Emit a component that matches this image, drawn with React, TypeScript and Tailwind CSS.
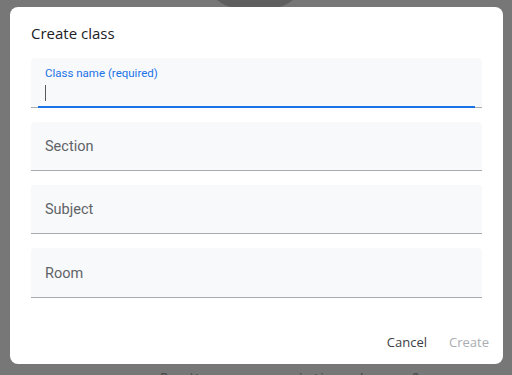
import React from "react";

function Field({ label, h }: { label: string; h: string }) {
  return (
    <div className={`${h} rounded-t-[4px] bg-[#f8f9fa] border-b border-[#a8abaf] flex items-center pl-[14px] pt-[2px]`}>
      <span className="text-[14.5px] text-[#5f6368]" style={{ fontFamily: "Roboto, sans-serif" }}>
        {label}
      </span>
    </div>
  );
}

export default function App() {
  return (
    <div className="relative w-[512px] h-[375px] overflow-hidden bg-[#777777] pt-[7px] pl-[10px]" style={{ fontFamily: "Roboto, sans-serif" }}>
      <div className="absolute left-[205px] top-[-60px] w-[100px] h-[68px] rounded-full bg-[#5e5e5e]" />
      <div className="absolute left-[160px] top-[369px] text-[14px] leading-[20px] text-[#4a4a4a] tracking-[2px] whitespace-nowrap">Don't see your existing classes?</div>
      <div className="relative w-[493px] h-[357px] bg-white rounded-[8px] flex flex-col px-[21px]">
        <div className="h-[51px] pt-[15px] text-[15px] text-[#202124]" style={{ fontFamily: "'Open Sans', Roboto, sans-serif" }}>
          Create class
        </div>
        <div className="flex flex-col gap-[14px]">
          <div className="relative h-[50px] rounded-t-[4px] bg-[#f8f9fa] border-b border-[#a8abaf] pl-[14px] pt-[7px]">
            <div className="text-[11.5px] text-[#1a73e8] leading-[16px]">Class name (required)</div>
            <div className="mt-[4px] w-px h-[16px] bg-[#5a5a5a]" />
            <div className="absolute left-[7px] right-[7px] bottom-[-1px] h-[2px] bg-[#1a73e8]" />
          </div>
          <Field label="Section" h="h-[49px]" />
          <Field label="Subject" h="h-[49px]" />
          <Field label="Room" h="h-[50px]" />
        </div>
        <div className="flex-1" />
        <div className="flex justify-end items-center gap-[22px] h-[36px] mb-[3px] mr-[-7px]" style={{ fontFamily: "'Open Sans', Roboto, sans-serif" }}>
          <span className="text-[13px] text-[#3c4043]">Cancel</span>
          <span className="text-[13px] text-[#a9adb1]">Create</span>
        </div>
      </div>
    </div>
  );
}
